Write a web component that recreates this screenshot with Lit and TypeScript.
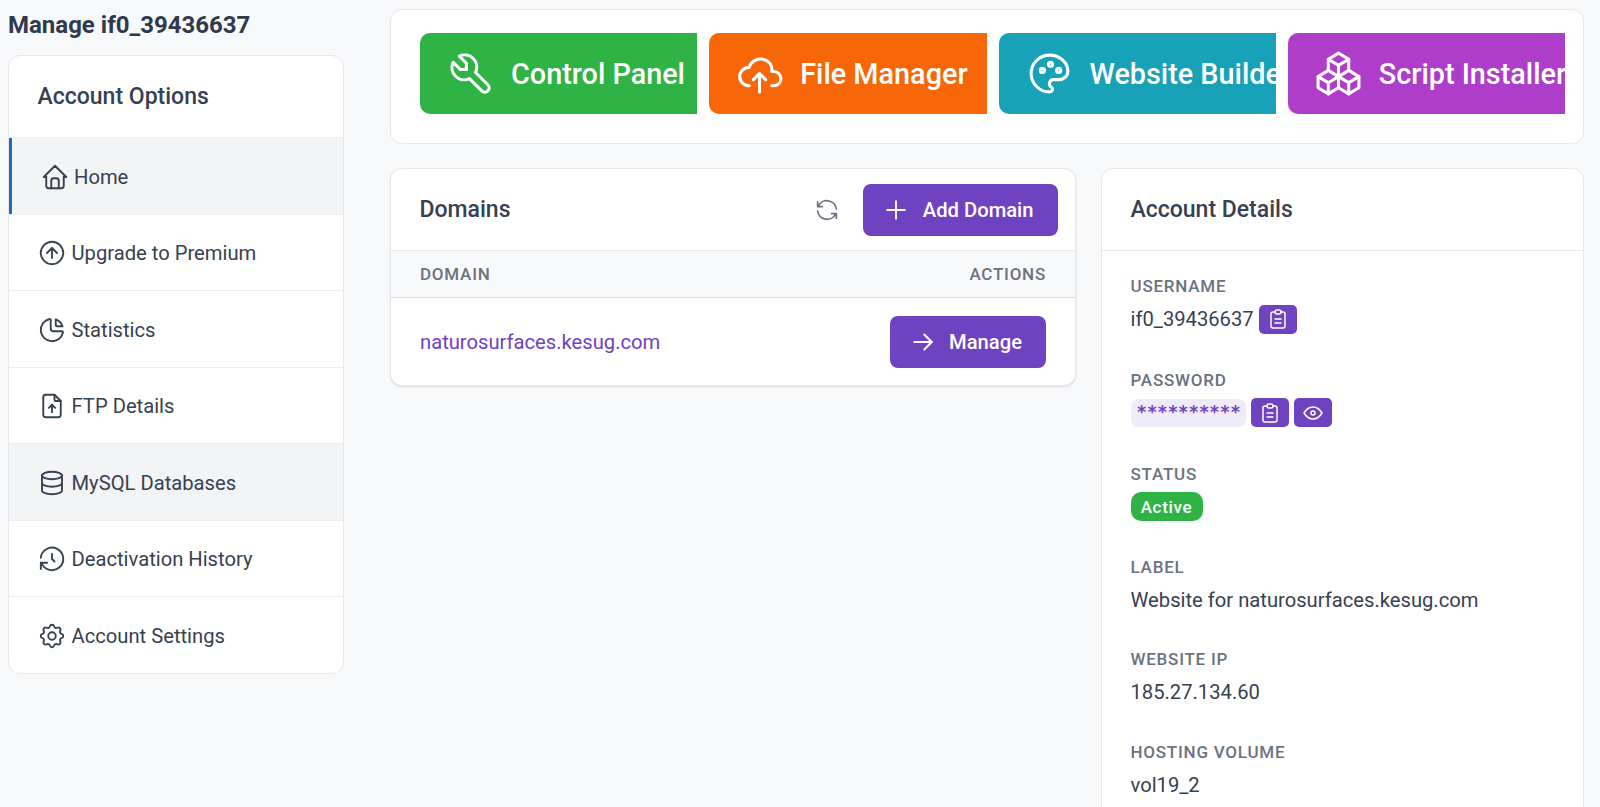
import { LitElement, css, html, svg } from "lit";
import { customElement } from "lit/decorators.js";

const ICONS: Record<string, string[]> = {
    tool: ["M7 10h3v-3l-3.5 -3.5a6 6 0 0 1 8 8l6 6a2 2 0 0 1 -3 3l-6 -6a6 6 0 0 1 -8 -8l3.5 3.5"],
    cloud: ["M7 18a4.6 4.4 0 0 1 0 -9a5 4.5 0 0 1 11 2h1a3.5 3.5 0 0 1 0 7h-1", "M9 15l3 -3l3 3", "M12 12l0 9"],
    palette: [
        "M12 21a9 9 0 0 1 0 -18c4.97 0 9 3.582 9 8c0 1.06 -.474 2.078 -1.318 2.828c-.844 .75 -1.989 1.172 -3.182 1.172h-2.5a2 2 0 0 0 -1 3.75a1.3 1.3 0 0 1 -1 2.25",
        "M8.5 10.5m-1 0a1 1 0 1 0 2 0a1 1 0 1 0 -2 0",
        "M12.5 7.5m-1 0a1 1 0 1 0 2 0a1 1 0 1 0 -2 0",
        "M16.5 10.5m-1 0a1 1 0 1 0 2 0a1 1 0 1 0 -2 0",
    ],
    packages: [
        "M7 16.5l-5 -3l5 -3l5 3v5.5l-5 3z", "M2 13.5v5.5l5 3", "M7 16.545l5 -3.03",
        "M17 16.5l-5 -3l5 -3l5 3v5.5l-5 3z", "M12 19l5 3", "M17 16.5l5 -3",
        "M12 13.5v-5.5l-5 -3l5 -3l5 3v5.5", "M7 5.03v5.455", "M12 8l5 -3",
    ],
    home: ["M5 12l-2 0l9 -9l9 9l-2 0", "M5 12v7a2 2 0 0 0 2 2h10a2 2 0 0 0 2 -2v-7", "M9 21v-6a2 2 0 0 1 2 -2h2a2 2 0 0 1 2 2v6"],
    up: ["M12 3a9 9 0 1 0 0 18a9 9 0 0 0 0 -18", "M16 12l-4 -4l-4 4", "M12 16v-8"],
    pie: ["M10 3.2a9 9 0 1 0 10.8 10.8a1 1 0 0 0 -1 -1h-6.8a2 2 0 0 1 -2 -2v-7a.9 .9 0 0 0 -1 -.8", "M15 3.5a9 9 0 0 1 5.5 5.5h-4.5a1 1 0 0 1 -1 -1v-4.5"],
    file: ["M14 3v4a1 1 0 0 0 1 1h4", "M17 21h-10a2 2 0 0 1 -2 -2v-14a2 2 0 0 1 2 -2h7l5 5v11a2 2 0 0 1 -2 2z", "M12 11v6", "M9.5 13.5l2.5 -2.5l2.5 2.5"],
    database: ["M12 6m-8 0a8 3 0 1 0 16 0a8 3 0 1 0 -16 0", "M4 6v6a8 3 0 0 0 16 0v-6", "M4 12v6a8 3 0 0 0 16 0v-6"],
    history: ["M12 8l0 4l2 2", "M3.05 11a9 9 0 1 1 .5 4m-.5 5v-5h5"],
    settings: [
        "M10.325 4.317c.426 -1.756 2.924 -1.756 3.35 0a1.724 1.724 0 0 0 2.573 1.066c1.543 -.94 3.31 .826 2.37 2.37a1.724 1.724 0 0 0 1.065 2.572c1.756 .426 1.756 2.924 0 3.35a1.724 1.724 0 0 0 -1.066 2.573c.94 1.543 -.826 3.31 -2.37 2.37a1.724 1.724 0 0 0 -2.572 1.065c-.426 1.756 -2.924 1.756 -3.35 0a1.724 1.724 0 0 0 -2.573 -1.066c-1.543 .94 -3.31 -.826 -2.37 -2.37a1.724 1.724 0 0 0 -1.065 -2.572c-1.756 -.426 -1.756 -2.924 0 -3.35a1.724 1.724 0 0 0 1.066 -2.573c-.94 -1.543 .826 -3.31 2.37 -2.37c1 .608 2.296 .07 2.572 -1.065z",
        "M9 12a3 3 0 1 0 6 0a3 3 0 0 0 -6 0",
    ],
    refresh: ["M20 11a8.1 8.1 0 0 0 -15.5 -2m-.5 -4v4h4", "M4 13a8.1 8.1 0 0 0 15.5 2m.5 4v-4h-4"],
    plus: ["M12 5v14", "M5 12h14"],
    arrow: ["M5 12l14 0", "M13 18l6 -6", "M13 6l6 6"],
    clipboard: [
        "M9 5h-2a2 2 0 0 0 -2 2v12a2 2 0 0 0 2 2h10a2 2 0 0 0 2 -2v-12a2 2 0 0 0 -2 -2h-2",
        "M9 3m0 2a2 2 0 0 1 2 -2h2a2 2 0 0 1 2 2v0a2 2 0 0 1 -2 2h-2a2 2 0 0 1 -2 -2z",
        "M9 12h6", "M9 16h6",
    ],
    eye: ["M10 12a2 2 0 1 0 4 0a2 2 0 0 0 -4 0", "M21 12c-2.4 4 -5.4 6 -9 6c-3.6 0 -6.6 -2 -9 -6c2.4 -4 5.4 -6 9 -6c3.6 0 6.6 2 9 6"],
};

const icon = (name: string, size: number) => html`
    <svg class="icon" width=${size} height=${size} viewBox="0 0 24 24" fill="none" stroke="currentColor"
        stroke-width="1.5" stroke-linecap="round" stroke-linejoin="round">
        ${ICONS[name].map((d) => svg`<path d=${d}></path>`)}
    </svg>`;

const NAV = [
    { name: "home", label: "Home", cls: "active" },
    { name: "up", label: "Upgrade to Premium", cls: "" },
    { name: "pie", label: "Statistics", cls: "" },
    { name: "file", label: "FTP Details", cls: "" },
    { name: "database", label: "MySQL Databases", cls: "hover" },
    { name: "history", label: "Deactivation History", cls: "" },
    { name: "settings", label: "Account Settings", cls: "" },
];

const TOOLS = [
    { name: "tool", label: "Control Panel", cls: "green" },
    { name: "cloud", label: "File Manager", cls: "orange" },
    { name: "palette", label: "Website Builder", cls: "teal" },
    { name: "packages", label: "Script Installer", cls: "magenta" },
];

@customElement("app-root")
export class AppRoot extends LitElement {
    static styles = css`
    :host {
        display: flex;
        height: 100vh;
        overflow: hidden;
        box-sizing: border-box;
        padding: 9px 16px 0 8px;
        gap: 46px;
        background: #f8f9fb;
        color: #374151;
        font-family: Roboto, "Noto Sans", sans-serif;
        font-size: 20.2px;
    }

    .icon {
        flex: none;
        display: block;
    }

    .card {
        background: #fff;
        border: 1px solid #e6e8ec;
        border-radius: 12px;
        box-sizing: border-box;
    }

    .side {
        width: 336px;
        flex: none;
    }

    .page-title {
        margin: 0 0 13px;
        font-size: 24px;
        line-height: 33px;
        font-weight: 700;
        color: #2f3a4d;
    }

    .side-title {
        height: 81px;
        display: flex;
        align-items: center;
        padding-left: 28.5px;
        font-size: 23px;
        font-weight: 500;
    }

    .nav-item {
        height: 76.5px;
        box-sizing: border-box;
        display: flex;
        align-items: center;
        gap: 4.5px;
        padding: 1.5px 0 0 28px;
        border-top: 1.5px solid #eceef1;
    }

    .nav-item.active {
        background: #f3f4f6;
        box-shadow: inset 3px 0 0 #206bc4;
        padding-left: 30.5px;
    }

    .nav-item.hover {
        background: #f3f4f6;
    }

    .main {
        width: 1194px;
        flex: none;
        display: flex;
        flex-direction: column;
        gap: 24px;
    }

    .tools {
        display: grid;
        grid-template-columns: repeat(4, 1fr);
        gap: 12px;
        padding: 23px 18px 29px 29px;
        height: 135px;
    }

    .tool-col {
        overflow: hidden;
    }

    .tool {
        display: flex;
        align-items: center;
        width: max-content;
        height: 81px;
        box-sizing: border-box;
        padding: 0 30px 0 26px;
        gap: 16px;
        border-radius: 10px;
        color: #fff;
        font-size: 28.8px;
        font-weight: 500;
    }

    .green { background: #2fb344; }
    .orange { background: #f76707; }
    .teal { background: #17a2b8; }
    .magenta { background: #ae3ec9; }

    .panels {
        display: grid;
        grid-template-columns: 686px 483px;
        gap: 25px;
        align-items: start;
    }

    .domains {
        box-shadow: 0 1px 2px rgba(0, 0, 0, .12);
    }

    .panel-head {
        height: 81px;
        box-sizing: border-box;
        display: flex;
        align-items: center;
        padding: 0 17.5px 0 28.5px;
        font-size: 23px;
        font-weight: 500;
    }

    .panel-head .grow {
        flex: 1;
    }

    .refresh {
        color: #6b7280;
        margin-right: 22px;
    }

    .btn {
        display: flex;
        align-items: center;
        gap: 11.5px;
        height: 52px;
        box-sizing: border-box;
        padding: 0 24px 0 18px;
        border-radius: 8px;
        background: #6f42c1;
        color: #fff;
        font-size: 20.2px;
        font-weight: 500;
    }

    .thead {
        height: 48px;
        box-sizing: border-box;
        display: flex;
        align-items: center;
        justify-content: space-between;
        padding: 0 29px;
        background: #f8f9fa;
        border-top: 1px solid #e6e8ec;
        border-bottom: 1px solid #d5d8dd;
        color: #6b7280;
        font-size: 17px;
        font-weight: 500;
        letter-spacing: .045em;
    }

    .row {
        height: 87px;
        display: flex;
        align-items: center;
        justify-content: space-between;
        padding: 0 29px;
    }

    .link {
        color: #6f42c1;
    }

    .details-body {
        border-top: 1px solid #e6e8ec;
        padding: 23px 28.5px 40px;
    }

    .field {
        height: 92.5px;
    }

    .field.tall {
        height: 94px;
    }

    .label {
        color: #6b7280;
        font-size: 17px;
        font-weight: 500;
        line-height: 24px;
        letter-spacing: .045em;
        margin-bottom: 6px;
    }

    .value {
        display: flex;
        align-items: center;
        gap: 5px;
        line-height: 30px;
    }

    .mini {
        width: 38px;
        height: 29px;
        border-radius: 5px;
        background: #6f42c1;
        color: #fff;
        display: flex;
        align-items: center;
        justify-content: center;
    }

    .secret {
        width: 115px;
        height: 28px;
        box-sizing: border-box;
        padding-left: 6px;
        border-radius: 8px;
        background: #efebf8;
        color: #6f42c1;
        font-family: "DejaVu Sans Mono", monospace;
        font-size: 17.3px;
        font-weight: 700;
        line-height: 27px;
    }

    .badge {
        height: 29px;
        width: 72px;
        border-radius: 10px;
        background: #2fb344;
        color: #fff;
        font-size: 17px;
        font-weight: 500;
        letter-spacing: .04em;
        display: flex;
        align-items: center;
        justify-content: center;
    }
    `;

    render() {
        return html`
        <aside class="side">
            <h1 class="page-title">Manage if0_39436637</h1>
            <div class="card">
                <div class="side-title">Account Options</div>
                ${NAV.map((n) => html`
                <div class="nav-item ${n.cls}">${icon(n.name, 30)}<span>${n.label}</span></div>`)}
            </div>
        </aside>
        <main class="main">
            <section class="card tools">
                ${TOOLS.map((t) => html`
                <div class="tool-col">
                    <div class="tool ${t.cls}">${icon(t.name, 49)}<span>${t.label}</span></div>
                </div>`)}
            </section>
            <div class="panels">
                <section class="card domains">
                    <div class="panel-head">
                        <span class="grow">Domains</span>
                        <span class="refresh">${icon("refresh", 28)}</span>
                        <div class="btn">${icon("plus", 30)}Add Domain</div>
                    </div>
                    <div class="thead"><span>DOMAIN</span><span>ACTIONS</span></div>
                    <div class="row">
                        <span class="link">naturosurfaces.kesug.com</span>
                        <div class="btn">${icon("arrow", 30)}Manage</div>
                    </div>
                </section>
                <section class="card">
                    <div class="panel-head">Account Details</div>
                    <div class="details-body">
                        <div class="field tall">
                            <div class="label">USERNAME</div>
                            <div class="value">if0_39436637 <span class="mini">${icon("clipboard", 24)}</span></div>
                        </div>
                        <div class="field tall">
                            <div class="label">PASSWORD</div>
                            <div class="value">
                                <span class="secret">**********</span>
                                <span class="mini">${icon("clipboard", 24)}</span>
                                <span class="mini">${icon("eye", 24)}</span>
                            </div>
                        </div>
                        <div class="field">
                            <div class="label">STATUS</div>
                            <div class="value"><span class="badge">Active</span></div>
                        </div>
                        <div class="field">
                            <div class="label">LABEL</div>
                            <div class="value">Website for naturosurfaces.kesug.com</div>
                        </div>
                        <div class="field">
                            <div class="label">WEBSITE IP</div>
                            <div class="value">185.27.134.60</div>
                        </div>
                        <div class="field">
                            <div class="label">HOSTING VOLUME</div>
                            <div class="value">vol19_2</div>
                        </div>
                    </div>
                </section>
            </div>
        </main>
        `;
    }
}

declare global {
    interface HTMLElementTagNameMap {
        "app-root": AppRoot
    }
}
